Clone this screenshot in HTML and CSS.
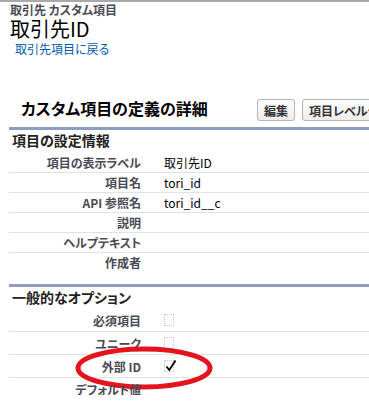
FILE: index.html
```html
<!DOCTYPE html>
<html lang="ja">
<head>
  <meta charset="UTF-8">
  <title>取引先ID</title>
  <link rel="stylesheet" href="styles.css">
</head>
<body>
  <div class="page">
    <div class="page-title">
      <div class="page-type">取引先 カスタム項目</div>
      <h1>取引先ID</h1>
      <a class="back-link" href="#">取引先項目に戻る</a>
    </div>

    <div class="pb-header">
      <h2>カスタム項目の定義の詳細</h2>
      <div class="pb-buttons">
        <button class="btn">編集</button>
        <button class="btn">項目レベルセキュリティの設定</button>
      </div>
    </div>

    <div class="section">
      <h3>項目の設定情報</h3>
      <div class="row"><div class="label">項目の表示ラベル</div><div class="value">取引先ID</div></div>
      <div class="row"><div class="label">項目名</div><div class="value">tori_id</div></div>
      <div class="row"><div class="label">API 参照名</div><div class="value">tori_id__c</div></div>
      <div class="row"><div class="label">説明</div><div class="value"></div></div>
      <div class="row"><div class="label">ヘルプテキスト</div><div class="value"></div></div>
      <div class="row last"><div class="label">作成者</div><div class="value"></div></div>
    </div>

    <div class="section options">
      <h3>一般的なオプション</h3>
      <div class="row tall"><div class="label">必須項目</div><div class="value"><span class="check"></span></div></div>
      <div class="row tall"><div class="label">ユニーク</div><div class="value"><span class="check"></span></div></div>
      <div class="row tall marked">
        <div class="label">外部 ID</div>
        <div class="value">
          <span class="check on">
            <svg width="12" height="13" viewBox="0 0 12 13"><path d="M1.5 7.5 L4.3 11 L10.5 1.5" fill="none" stroke="#000" stroke-width="1.8"/></svg>
          </span>
        </div>
        <!-- 赤い丸の注記 -->
        <svg class="circle" width="140" height="44" viewBox="0 0 140 44"><ellipse cx="70" cy="22" rx="66" ry="19" fill="none" stroke="#e3141d" stroke-width="5"/></svg>
      </div>
      <div class="row tall last"><div class="label">デフォルト値</div><div class="value"></div></div>
    </div>
  </div>
</body>
</html>
```

FILE: styles.css
```css
body {
  margin: 0;
  background: #fff;
  font-family: "Noto Sans CJK JP", sans-serif;
  font-feature-settings: "palt";
  font-size: 12px;
  color: #000;
  overflow: hidden;
}

.page {
  height: 393px;
  overflow: hidden;
  border-top: 2px solid #a9a9a9;
}

.page-title {
  padding: 0 10px;
}

.page-type {
  font-weight: bold;
  color: #4a4a56;
  line-height: 15px;
}

h1 {
  margin: 0;
  font-size: 20px;
  font-weight: normal;
  line-height: 24px;
}

.back-link {
  display: block;
  margin-left: 5px;
  color: #015ba7;
  text-decoration: none;
  line-height: 16px;
}

.pb-header {
  display: grid;
  grid-template-columns: 257px auto;
  align-items: center;
  height: 22px;
  margin-top: 42px;
}

h2 {
  margin: 0 0 3px;
  padding-left: 21px;
  font-size: 16px;
  line-height: 19px;
  white-space: nowrap;
}

.pb-buttons {
  display: flex;
  gap: 7px;
}

.btn {
  flex-shrink: 0;
  height: 22px;
  padding: 0 6px;
  border: 1px solid #b5b5b5;
  border-radius: 3px;
  background: linear-gradient(#fdfdfd, #ededed);
  font-family: inherit;
  font-feature-settings: "palt";
  font-size: 12px;
  font-weight: bold;
  color: #333;
  white-space: nowrap;
}

.section {
  margin: 6px 0 0 9px;
  border-top: 3px solid #8e9dbf;
}

.section.options {
  margin-top: 12px;
}

h3 {
  margin: 0;
  padding: 1px 3px 3px;
  font-size: 14px;
  line-height: 19px;
  color: #222;
}

.options h3 {
  padding-bottom: 2px;
}

.row {
  position: relative;
  display: grid;
  grid-template-columns: 142px 1fr;
  align-items: center;
  height: 19px;
  border-bottom: 1px solid #e3e3e3;
}

.row.tall {
  height: 22px;
}

.row.last {
  border-bottom: none;
}

.label {
  padding-right: 10px;
  text-align: right;
  font-weight: bold;
  color: #4a4a56;
  white-space: nowrap;
}

.value {
  display: flex;
  align-items: center;
  padding-left: 13px;
}

.check {
  position: relative;
  display: block;
  width: 8px;
  height: 10px;
  border: 1px dotted #c8c8c8;
}

.check svg {
  position: absolute;
  left: 0;
  top: -2px;
}

.circle {
  position: absolute;
  left: 65px;
  top: -9px;
}
```
